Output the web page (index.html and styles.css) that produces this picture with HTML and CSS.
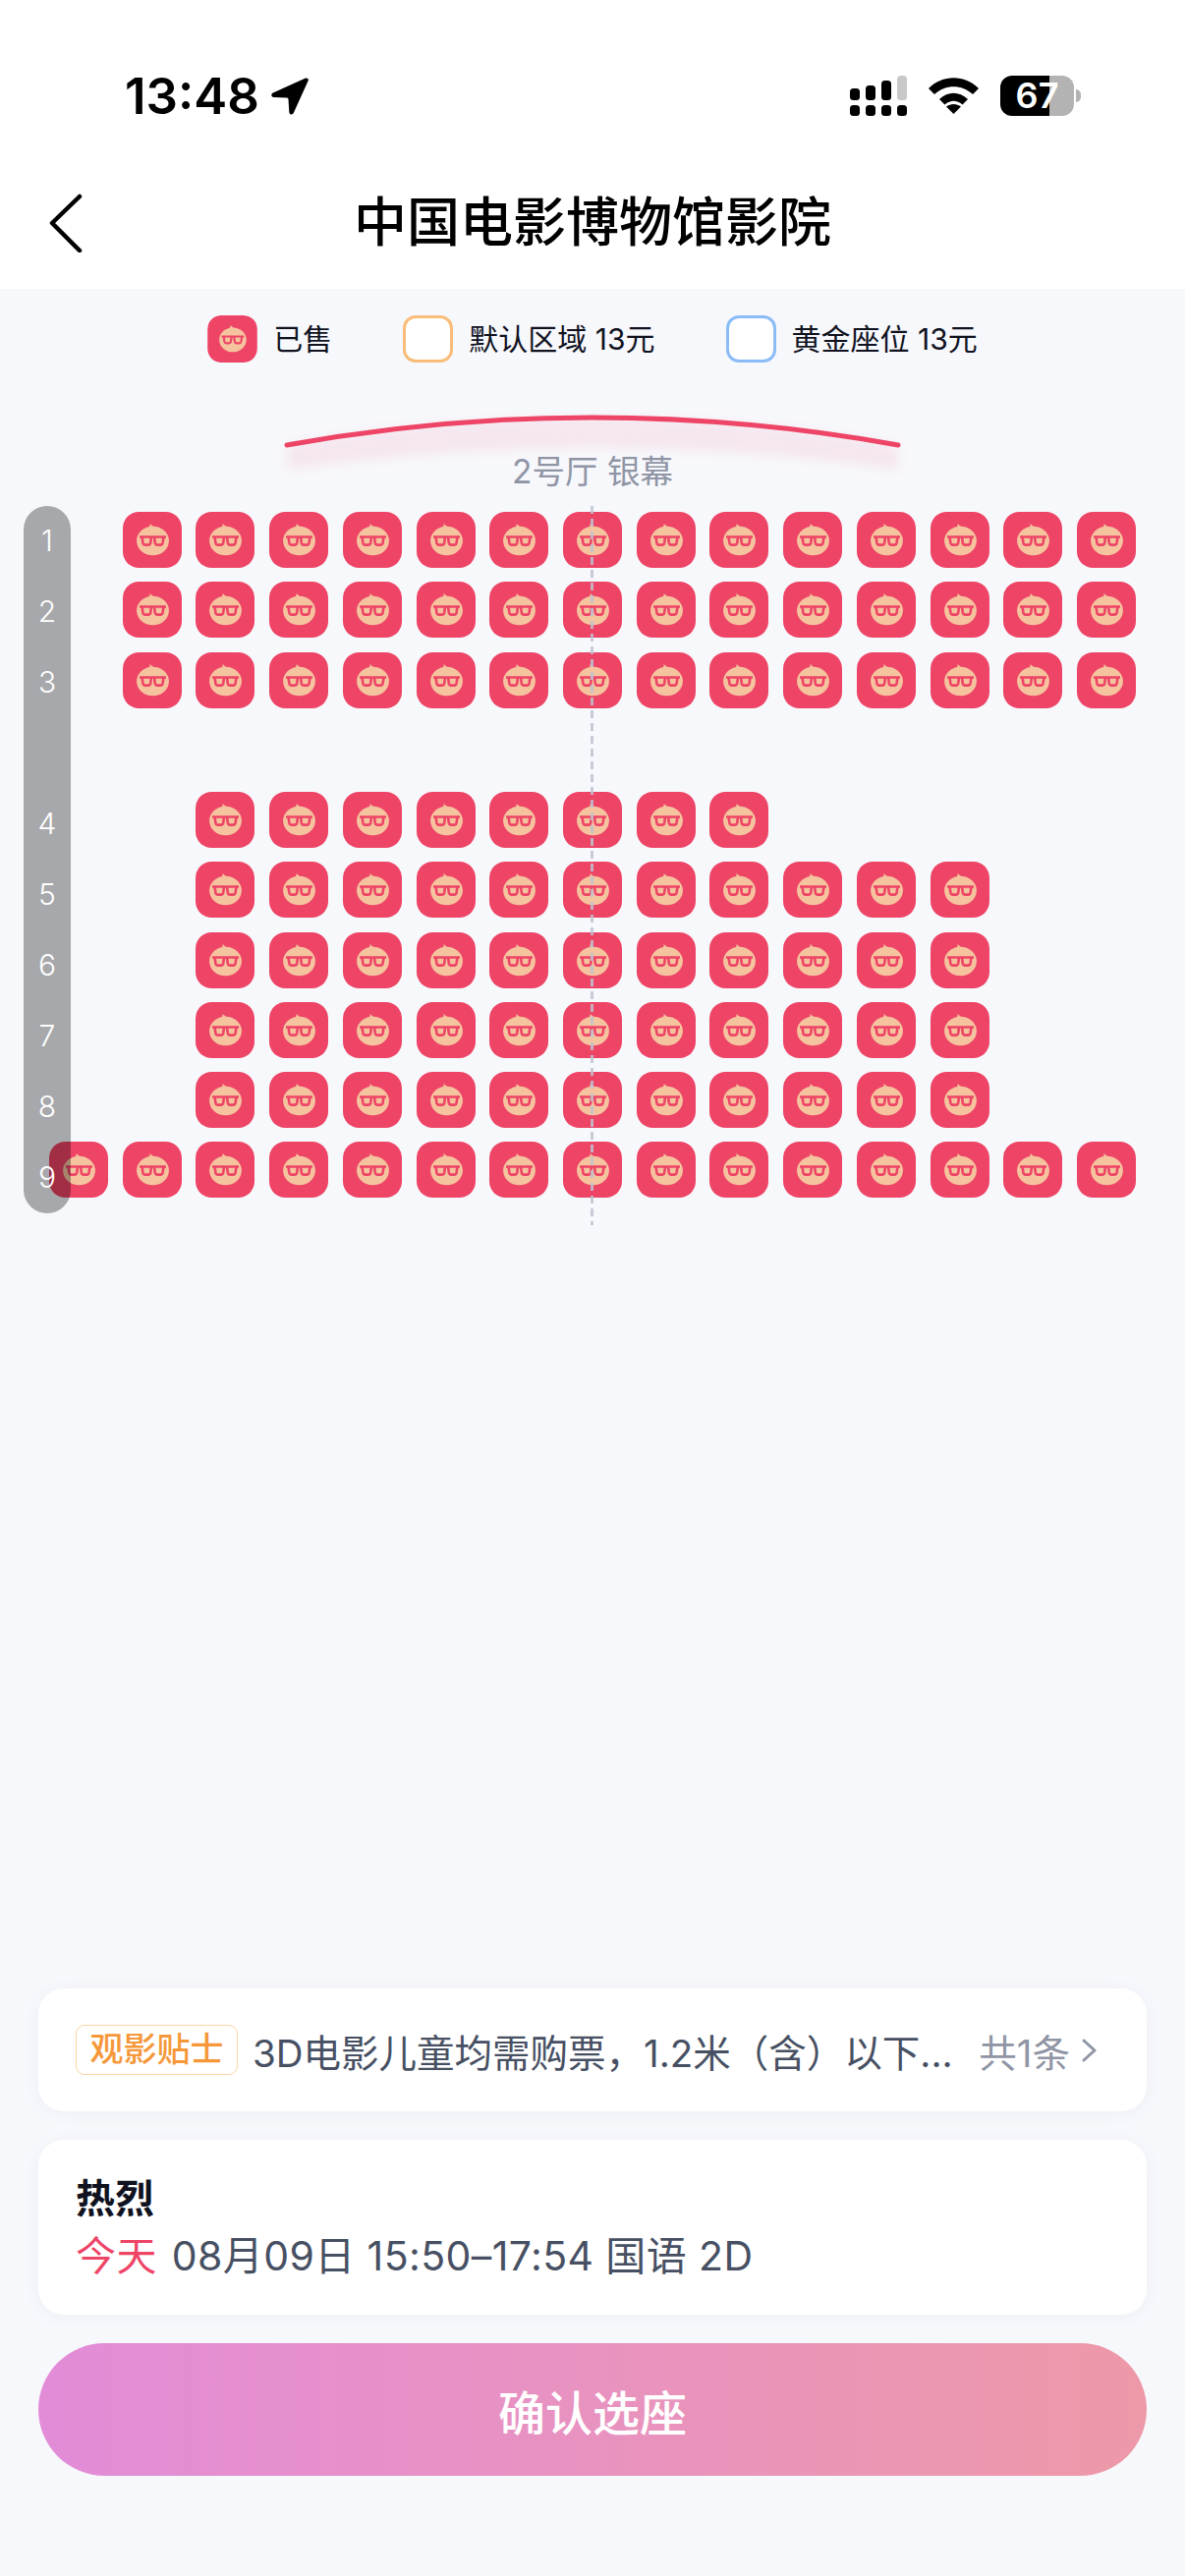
FILE: index.html
```html
<!DOCTYPE html>
<html lang="zh">
<head>
<meta charset="UTF-8">
<title>选座</title>
<link rel="stylesheet" href="styles.css">
</head>
<body>
<svg class="defs" width="0" height="0">
	<symbol id="sold" viewBox="0 0 60 57">
		<rect width="60" height="57" rx="16.5" fill="#ee4466"/>
		<path d="M25 17 Q28 15.5 27.5 12 Q30.5 14.5 33.5 17Z" fill="#f5c49f"/>
		<ellipse cx="30.5" cy="29.5" rx="16.4" ry="14.8" fill="#f5c49f"/>
		<path d="M17 25.5H44M19.5 25.5L20.4 31.5Q20.8 33.6 22.8 33.6H25.8Q27.8 33.6 28.2 31.5L29 25.5M32 25.5L32.8 31.5Q33.2 33.6 35.2 33.6H38.2Q40.2 33.6 40.6 31.5L41.5 25.5" fill="none" stroke="#ee4466" stroke-width="2.6"/>
	</symbol>
</svg>

<header class="top">
	<div class="status">
		<div class="clock">
			<span>13:48</span>
			<svg width="38" height="38" viewBox="0 0 38 38"><path d="M35 .6C37 0 38.4 1.5 37.6 3.2L23 35.6C21.6 38.6 18.6 38 18.3 35L17.5 22Q17.4 20.5 16 20.4L2.6 20C0 19.8-.6 16.5 1.8 15.5Z"/></svg>
		</div>
		<div class="indicators">
			<svg width="58" height="41" viewBox="0 0 58 41">
				<rect x="0" y="13" width="10" height="12" rx="3.5"/>
				<rect x="16" y="10" width="10" height="15" rx="3.5"/>
				<rect x="32" y="5" width="10" height="20" rx="3.5"/>
				<rect x="48" y="0" width="10" height="25" rx="3.5" fill="#c8c8c8"/>
				<rect x="0" y="30" width="10" height="11" rx="3.5"/>
				<rect x="16" y="30" width="10" height="11" rx="3.5"/>
				<rect x="32" y="30" width="10" height="11" rx="3.5"/>
				<rect x="48" y="30" width="10" height="11" rx="3.5"/>
			</svg>
			<svg width="51" height="37" viewBox="0 0 51 37">
				<path d="M0 11C14-3.5 37-3.5 51 11L45 17C34 6.5 17 6.5 6 17Z"/>
				<path d="M11 22C20 13.5 31 13.5 40 22L34.5 27.5C28.5 22.5 22.5 22.5 16.5 27.5Z"/>
				<path d="M25.5 37L18 29.5C22.5 26 28.5 26 33 29.5Z"/>
			</svg>
			<div class="battery">67</div>
		</div>
	</div>
	<nav class="nav">
		<svg class="back" width="34" height="60" viewBox="0 0 34 60"><path d="M31 3L3 30L31 58" fill="none" stroke="#000" stroke-width="4.5" stroke-linecap="round" stroke-linejoin="round"/></svg>
		<h1>中国电影博物馆影院</h1>
	</nav>
</header>

<main class="hall">
	<ul class="legend">
		<li><svg class="swatch"><use href="#sold"/></svg>已售</li>
		<li><span class="swatch normal"></span>默认区域 13元</li>
		<li><span class="swatch gold"></span>黄金座位 13元</li>
	</ul>

	<div class="screen">
		<svg width="660" height="76" viewBox="0 0 660 76">
			<defs>
				<filter id="soft" x="-5%" y="-30%" width="110%" height="160%">
					<feGaussianBlur stdDeviation="6"/>
				</filter>
			</defs>
			<path d="M19 33Q330-23 641 33L641 58Q330 14 19 58Z" fill="#f5e6ef" filter="url(#soft)"/>
			<path d="M19 33Q330-23 641 33" fill="none" stroke="#ee4466" stroke-width="5" stroke-linecap="round"/>
		</svg>
		<p>2号厅 银幕</p>
	</div>

	<div class="map">
		<div class="row from-2">
			<svg class="seat"><use href="#sold"/></svg><svg class="seat"><use href="#sold"/></svg><svg class="seat"><use href="#sold"/></svg><svg class="seat"><use href="#sold"/></svg><svg class="seat"><use href="#sold"/></svg><svg class="seat"><use href="#sold"/></svg><svg class="seat"><use href="#sold"/></svg><svg class="seat"><use href="#sold"/></svg><svg class="seat"><use href="#sold"/></svg><svg class="seat"><use href="#sold"/></svg><svg class="seat"><use href="#sold"/></svg><svg class="seat"><use href="#sold"/></svg><svg class="seat"><use href="#sold"/></svg><svg class="seat"><use href="#sold"/></svg>
		</div>
		<div class="row from-2">
			<svg class="seat"><use href="#sold"/></svg><svg class="seat"><use href="#sold"/></svg><svg class="seat"><use href="#sold"/></svg><svg class="seat"><use href="#sold"/></svg><svg class="seat"><use href="#sold"/></svg><svg class="seat"><use href="#sold"/></svg><svg class="seat"><use href="#sold"/></svg><svg class="seat"><use href="#sold"/></svg><svg class="seat"><use href="#sold"/></svg><svg class="seat"><use href="#sold"/></svg><svg class="seat"><use href="#sold"/></svg><svg class="seat"><use href="#sold"/></svg><svg class="seat"><use href="#sold"/></svg><svg class="seat"><use href="#sold"/></svg>
		</div>
		<div class="row from-2">
			<svg class="seat"><use href="#sold"/></svg><svg class="seat"><use href="#sold"/></svg><svg class="seat"><use href="#sold"/></svg><svg class="seat"><use href="#sold"/></svg><svg class="seat"><use href="#sold"/></svg><svg class="seat"><use href="#sold"/></svg><svg class="seat"><use href="#sold"/></svg><svg class="seat"><use href="#sold"/></svg><svg class="seat"><use href="#sold"/></svg><svg class="seat"><use href="#sold"/></svg><svg class="seat"><use href="#sold"/></svg><svg class="seat"><use href="#sold"/></svg><svg class="seat"><use href="#sold"/></svg><svg class="seat"><use href="#sold"/></svg>
		</div>
		<div class="row"></div>
		<div class="row from-3">
			<svg class="seat"><use href="#sold"/></svg><svg class="seat"><use href="#sold"/></svg><svg class="seat"><use href="#sold"/></svg><svg class="seat"><use href="#sold"/></svg><svg class="seat"><use href="#sold"/></svg><svg class="seat"><use href="#sold"/></svg><svg class="seat"><use href="#sold"/></svg><svg class="seat"><use href="#sold"/></svg>
		</div>
		<div class="row from-3">
			<svg class="seat"><use href="#sold"/></svg><svg class="seat"><use href="#sold"/></svg><svg class="seat"><use href="#sold"/></svg><svg class="seat"><use href="#sold"/></svg><svg class="seat"><use href="#sold"/></svg><svg class="seat"><use href="#sold"/></svg><svg class="seat"><use href="#sold"/></svg><svg class="seat"><use href="#sold"/></svg><svg class="seat"><use href="#sold"/></svg><svg class="seat"><use href="#sold"/></svg><svg class="seat"><use href="#sold"/></svg>
		</div>
		<div class="row from-3">
			<svg class="seat"><use href="#sold"/></svg><svg class="seat"><use href="#sold"/></svg><svg class="seat"><use href="#sold"/></svg><svg class="seat"><use href="#sold"/></svg><svg class="seat"><use href="#sold"/></svg><svg class="seat"><use href="#sold"/></svg><svg class="seat"><use href="#sold"/></svg><svg class="seat"><use href="#sold"/></svg><svg class="seat"><use href="#sold"/></svg><svg class="seat"><use href="#sold"/></svg><svg class="seat"><use href="#sold"/></svg>
		</div>
		<div class="row from-3">
			<svg class="seat"><use href="#sold"/></svg><svg class="seat"><use href="#sold"/></svg><svg class="seat"><use href="#sold"/></svg><svg class="seat"><use href="#sold"/></svg><svg class="seat"><use href="#sold"/></svg><svg class="seat"><use href="#sold"/></svg><svg class="seat"><use href="#sold"/></svg><svg class="seat"><use href="#sold"/></svg><svg class="seat"><use href="#sold"/></svg><svg class="seat"><use href="#sold"/></svg><svg class="seat"><use href="#sold"/></svg>
		</div>
		<div class="row from-3">
			<svg class="seat"><use href="#sold"/></svg><svg class="seat"><use href="#sold"/></svg><svg class="seat"><use href="#sold"/></svg><svg class="seat"><use href="#sold"/></svg><svg class="seat"><use href="#sold"/></svg><svg class="seat"><use href="#sold"/></svg><svg class="seat"><use href="#sold"/></svg><svg class="seat"><use href="#sold"/></svg><svg class="seat"><use href="#sold"/></svg><svg class="seat"><use href="#sold"/></svg><svg class="seat"><use href="#sold"/></svg>
		</div>
		<div class="row">
			<svg class="seat"><use href="#sold"/></svg><svg class="seat"><use href="#sold"/></svg><svg class="seat"><use href="#sold"/></svg><svg class="seat"><use href="#sold"/></svg><svg class="seat"><use href="#sold"/></svg><svg class="seat"><use href="#sold"/></svg><svg class="seat"><use href="#sold"/></svg><svg class="seat"><use href="#sold"/></svg><svg class="seat"><use href="#sold"/></svg><svg class="seat"><use href="#sold"/></svg><svg class="seat"><use href="#sold"/></svg><svg class="seat"><use href="#sold"/></svg><svg class="seat"><use href="#sold"/></svg><svg class="seat"><use href="#sold"/></svg><svg class="seat"><use href="#sold"/></svg>
		</div>

		<!-- 中线 / 排号 盖在座位上面 -->
		<div class="midline"></div>
		<ol class="rownums">
			<li>1</li><li>2</li><li>3</li><li></li><li>4</li><li>5</li><li>6</li><li>7</li><li>8</li><li>9</li>
		</ol>
	</div>
</main>

<footer class="bottom">
	<div class="card tips">
		<span class="tag">观影贴士</span>
		<span class="tip-text">3D电影儿童均需购票，1.2米（含）以下...</span>
		<span class="tip-more">共1条
			<svg width="15" height="24" viewBox="0 0 15 24"><path d="M2 2L13 12L2 22" fill="none" stroke="#8f95a5" stroke-width="3" stroke-linecap="round" stroke-linejoin="round"/></svg>
		</span>
	</div>
	<div class="card show">
		<h2>热烈</h2>
		<p><em>今天</em> 08月09日 15:50–17:54 国语 2D</p>
	</div>
	<button class="confirm">确认选座</button>
</footer>
</body>
</html>
```

FILE: styles.css
```css
* {
	margin: 0;
	padding: 0;
	box-sizing: border-box;
}

body {
	width: 1206px;
	height: 2622px;
	display: flex;
	flex-direction: column;
	overflow: hidden;
	background: #f7f8fc;
	color: #000;
	font-family: Inter, "Noto Sans CJK SC", sans-serif;
}

.defs {
	display: block;
	height: 0;
}

.top {
	height: 294px;
	background: #fff;
}

.status {
	height: 160px;
	padding: 77px 113px 0 127px;
	display: flex;
	justify-content: space-between;
	align-items: flex-start;
}

.clock {
	display: flex;
	align-items: center;
	gap: 12px;
	height: 41px;
	font-size: 51px;
	font-weight: 600;
}

.indicators {
	display: flex;
	align-items: center;
	gap: 22px;
}

.battery {
	position: relative;
	width: 75px;
	height: 41px;
	border-radius: 12px;
	background: linear-gradient(90deg, #000 66.7%, #b3b3b3 66.7%);
	color: #fff;
	font-size: 36px;
	font-weight: 600;
	line-height: 41px;
	text-align: center;
}

.battery::after {
	content: "";
	position: absolute;
	left: 77px;
	top: 14px;
	width: 5px;
	height: 13px;
	border-radius: 0 6px 6px 0;
	background: #b3b3b3;
}

.nav {
	height: 134px;
	display: grid;
	grid-template-columns: 1fr auto 1fr;
	align-items: center;
	padding-left: 50px;
}

.back {
	display: block;
}

.nav h1 {
	font-size: 54px;
	font-weight: 500;
	line-height: 1;
	transform: translateX(-25px);
}

.hall {
	flex: 1;
}

.legend {
	list-style: none;
	display: flex;
	justify-content: center;
	gap: 72px;
	padding-top: 27px;
	font-size: 30px;
	line-height: 48px;
	color: #10131f;
}

.legend li {
	display: flex;
	align-items: center;
	gap: 16px;
}

.swatch {
	display: block;
	width: 51px;
	height: 48px;
	border-radius: 13px;
	border: 3px solid;
	background: #fff;
}

svg.swatch {
	border: 0;
	background: none;
}

.normal {
	border-color: #f9bc79;
}

.gold {
	border-color: #8bbcf6;
}

.screen {
	margin-top: 51px;
	display: flex;
	flex-direction: column;
	align-items: center;
}

.screen svg {
	display: block;
}

.screen p {
	margin-top: -36px;
	font-size: 33.5px;
	line-height: 40px;
	color: #8f95a5;
	position: relative;
}

.map {
	position: relative;
	margin-top: 15px;
	padding: 6px 0 0 50px;
}

.row {
	display: grid;
	grid-template-columns: repeat(15, 60px);
	column-gap: 14.72px;
	height: 71.25px;
}

.seat {
	display: block;
	width: 60px;
	height: 57px;
}

.from-2 .seat:first-child {
	grid-column-start: 2;
}

.from-3 .seat:first-child {
	grid-column-start: 3;
}

.midline {
	position: absolute;
	left: 601px;
	top: 0;
	width: 3px;
	height: 732px;
	background: repeating-linear-gradient(180deg, rgba(190, 195, 208, .85) 0 8px, transparent 8px 13px);
}

.rownums {
	position: absolute;
	left: 24px;
	top: 0;
	width: 48px;
	height: 720px;
	border-radius: 24px;
	background: rgba(0, 0, 0, .32);
	list-style: none;
	color: #fff;
	font-size: 30px;
	font-weight: 300;
	text-align: center;
}

.rownums li {
	height: 72px;
	line-height: 70px;
}

.bottom {
	display: flex;
	flex-direction: column;
	gap: 29px;
	padding: 0 39px 102px;
}

.card {
	background: #fff;
	border-radius: 26px;
	box-shadow: 0 2px 16px rgba(120, 130, 160, .07);
}

.tips {
	height: 125px;
	padding: 0 51px 0 38px;
	display: flex;
	align-items: center;
	font-size: 38.5px;
	color: #475063;
}

.tag {
	width: 165px;
	height: 51px;
	border: 1.5px solid #fbd5a5;
	border-radius: 9px;
	color: #f5983a;
	font-size: 34px;
	font-weight: 500;
	line-height: 47px;
	text-align: center;
}

.tip-text {
	margin-left: 15px;
	white-space: nowrap;
}

.tip-more {
	margin-left: auto;
	display: flex;
	align-items: center;
	gap: 12px;
	color: #8f95a5;
}

.show {
	height: 178px;
	padding: 32px 38px 0;
}

.show h2 {
	font-size: 40px;
	font-weight: 700;
	line-height: 56px;
	color: #10131f;
}

.show p {
	font-size: 41px;
	line-height: 60px;
	letter-spacing: .4px;
	color: #475063;
}

.show em {
	font-style: normal;
	margin-right: 3px;
	color: #ee4466;
}

.confirm {
	height: 135px;
	border: 0;
	border-radius: 68px;
	background: linear-gradient(90deg, #e28cd8, #ee99a8);
	color: #fff;
	font-family: inherit;
	font-size: 48px;
	font-weight: 500;
}
```
